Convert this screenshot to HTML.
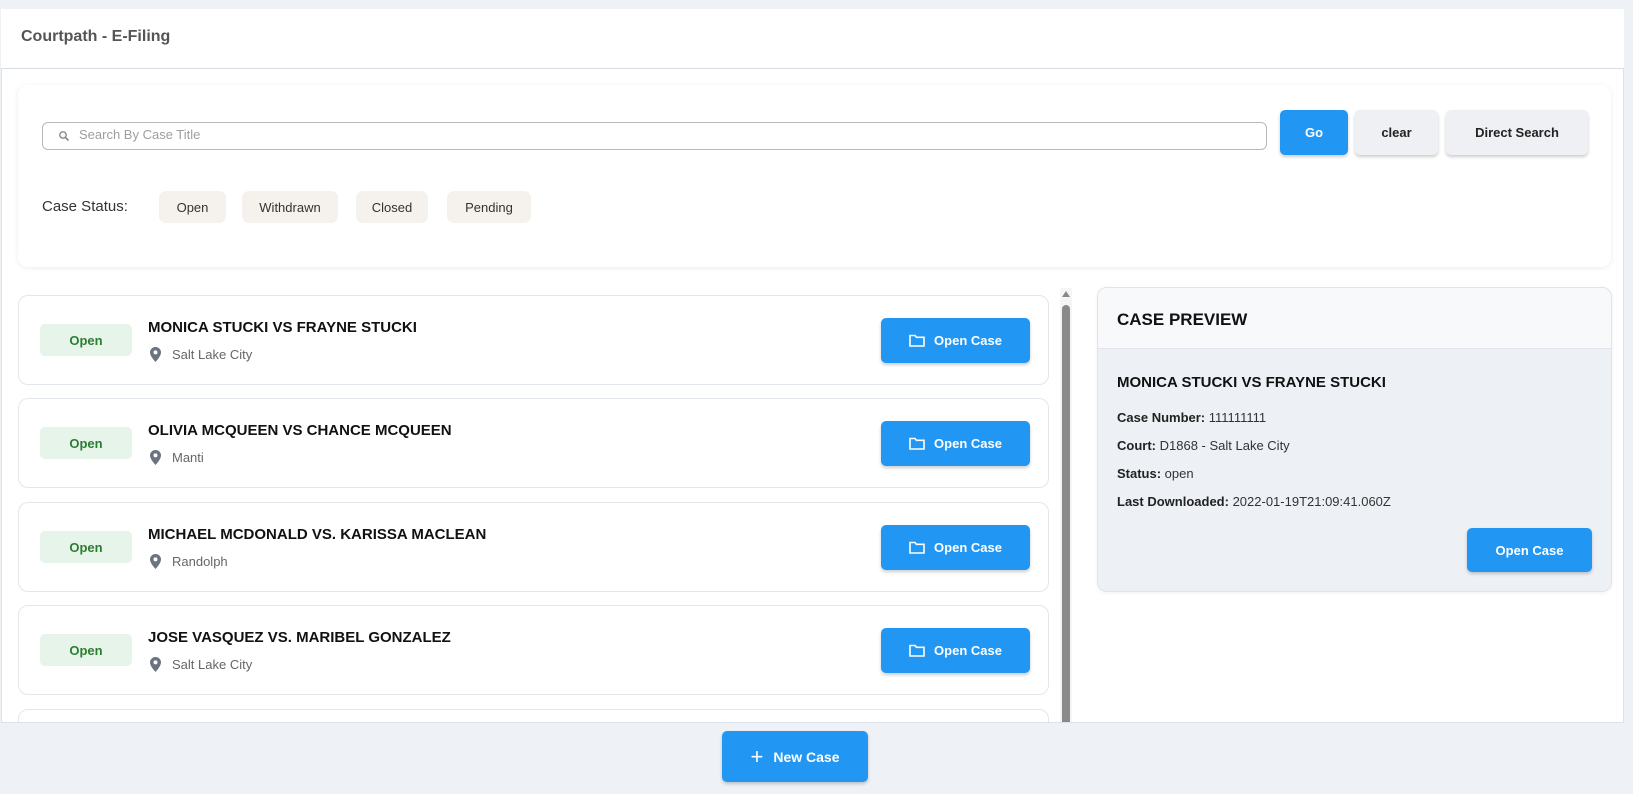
<!DOCTYPE html>
<html><head><meta charset="utf-8"><style>
*{box-sizing:border-box;margin:0;padding:0}
body{width:1633px;height:794px;overflow:hidden;background:#eef1f5;font-family:"Liberation Sans",Arial,sans-serif;position:relative}
.abs{position:absolute}
.main{left:1px;top:9px;width:1623px;height:785px;background:#fff;border:1px solid #dde2ea}
.hdr{left:1px;top:9px;width:1623px;height:60px;border-bottom:1px solid #d8dde5;background:#fff}
.title{left:21px;top:28px;font-size:16px;font-weight:bold;color:#555}
.fcard{left:18px;top:85px;width:1593px;height:182px;background:#fff;border-radius:10px;box-shadow:0 1px 6px rgba(0,0,0,.08)}
.search{left:42px;top:122px;width:1225px;height:28px;border:1px solid #b9b9b9;border-radius:6px}
.ph{left:79px;top:127px;font-size:13px;color:#9e9e9e}
.btn{display:flex;align-items:center;justify-content:center;border-radius:5px;font-weight:bold;font-size:13px;box-shadow:0 2px 3px rgba(0,0,0,.2)}
.blue{background:#2196f3;color:#fff}
.grey{background:#eef0f3;color:#222}
.lbl{left:42px;top:198px;font-size:15px;color:#333}
.chip{top:191px;height:32px;background:#f5f1ed;border-radius:7px;font-size:13px;color:#333;display:flex;align-items:center;justify-content:center}
.card{left:18px;width:1031px;height:90px;border:1px solid #e3e6ea;border-radius:10px;background:#fff}
.badge{left:21px;top:28px;width:92px;height:32px;background:#e6f4ea;color:#2e7d32;font-weight:bold;font-size:13px;border-radius:5px;display:flex;align-items:center;justify-content:center}
.ct{left:129px;top:23px;font-size:15px;font-weight:bold;color:#111}
.loc{left:153px;top:51px;font-size:13px;color:#666}
.pin{left:131px;top:51px}
.ob{left:862px;top:22px;width:149px;height:45px}
.pv{left:1097px;top:287px;width:515px;height:305px;border:1px solid #e0e4ea;border-radius:10px;background:#edf0f5;overflow:hidden;box-shadow:0 1px 4px rgba(0,0,0,.06)}
.pvh{left:0;top:0;width:100%;height:61px;background:#f8f9fb;border-bottom:1px solid #e0e4ea}
.pl{left:19px;font-size:13px;color:#333}
.pl b{color:#222}
.bottom{left:1px;top:722px;width:1623px;height:72px;background:#eef1f5;border-top:1px solid #dde2ea}
</style></head><body>
<div class="abs main"></div>
<div class="abs hdr"></div>
<div class="abs title">Courtpath - E-Filing</div>
<div class="abs fcard"></div>
<div class="abs search"></div>
<svg class="abs" style="left:58px;top:130px" width="12" height="12" viewBox="0 0 12 12"><circle cx="5" cy="5" r="3.2" fill="none" stroke="#888" stroke-width="1.4"/><path d="M7.4 7.4L10.5 10.5" stroke="#888" stroke-width="1.6"/></svg>
<div class="abs ph">Search By Case Title</div>
<div class="abs btn blue" style="left:1280px;top:110px;width:68px;height:45px">Go</div>
<div class="abs btn grey" style="left:1355px;top:110px;width:83px;height:45px">clear</div>
<div class="abs btn grey" style="left:1446px;top:110px;width:142px;height:45px">Direct Search</div>
<div class="abs lbl">Case Status:</div>
<div class="abs chip" style="left:159px;width:67px">Open</div>
<div class="abs chip" style="left:242px;width:96px">Withdrawn</div>
<div class="abs chip" style="left:356px;width:72px">Closed</div>
<div class="abs chip" style="left:447px;width:84px">Pending</div>

<div class="abs card" style="top:295px"><div class="abs badge">Open</div><div class="abs ct">MONICA STUCKI VS FRAYNE STUCKI</div><svg class="abs pin" width="11" height="15" viewBox="0 0 11 15"><path d="M5.5 0C2.5 0 0 2.4 0 5.4 0 9.4 5.5 15 5.5 15S11 9.4 11 5.4C11 2.4 8.5 0 5.5 0z" fill="#6b7280"/><circle cx="5.5" cy="5.4" r="2" fill="#fff"/></svg><div class="abs loc">Salt Lake City</div><div class="abs btn blue ob"><svg width="16" height="13" viewBox="0 0 16 13" style="margin-right:9px"><path d="M1 1.5h5l1.5 1.8H15V12H1z" fill="none" stroke="#fff" stroke-width="1.6"/></svg>Open Case</div></div>
<div class="abs card" style="top:398px"><div class="abs badge">Open</div><div class="abs ct">OLIVIA MCQUEEN VS CHANCE MCQUEEN</div><svg class="abs pin" width="11" height="15" viewBox="0 0 11 15"><path d="M5.5 0C2.5 0 0 2.4 0 5.4 0 9.4 5.5 15 5.5 15S11 9.4 11 5.4C11 2.4 8.5 0 5.5 0z" fill="#6b7280"/><circle cx="5.5" cy="5.4" r="2" fill="#fff"/></svg><div class="abs loc">Manti</div><div class="abs btn blue ob"><svg width="16" height="13" viewBox="0 0 16 13" style="margin-right:9px"><path d="M1 1.5h5l1.5 1.8H15V12H1z" fill="none" stroke="#fff" stroke-width="1.6"/></svg>Open Case</div></div>
<div class="abs card" style="top:502px"><div class="abs badge">Open</div><div class="abs ct">MICHAEL MCDONALD VS. KARISSA MACLEAN</div><svg class="abs pin" width="11" height="15" viewBox="0 0 11 15"><path d="M5.5 0C2.5 0 0 2.4 0 5.4 0 9.4 5.5 15 5.5 15S11 9.4 11 5.4C11 2.4 8.5 0 5.5 0z" fill="#6b7280"/><circle cx="5.5" cy="5.4" r="2" fill="#fff"/></svg><div class="abs loc">Randolph</div><div class="abs btn blue ob"><svg width="16" height="13" viewBox="0 0 16 13" style="margin-right:9px"><path d="M1 1.5h5l1.5 1.8H15V12H1z" fill="none" stroke="#fff" stroke-width="1.6"/></svg>Open Case</div></div>
<div class="abs card" style="top:605px"><div class="abs badge">Open</div><div class="abs ct">JOSE VASQUEZ VS. MARIBEL GONZALEZ</div><svg class="abs pin" width="11" height="15" viewBox="0 0 11 15"><path d="M5.5 0C2.5 0 0 2.4 0 5.4 0 9.4 5.5 15 5.5 15S11 9.4 11 5.4C11 2.4 8.5 0 5.5 0z" fill="#6b7280"/><circle cx="5.5" cy="5.4" r="2" fill="#fff"/></svg><div class="abs loc">Salt Lake City</div><div class="abs btn blue ob"><svg width="16" height="13" viewBox="0 0 16 13" style="margin-right:9px"><path d="M1 1.5h5l1.5 1.8H15V12H1z" fill="none" stroke="#fff" stroke-width="1.6"/></svg>Open Case</div></div>
<div class="abs card" style="top:709px;height:30px"></div>

<div class="abs" style="left:1060px;top:288px;width:12px;height:434px;background:#f5f5f5"></div>
<svg class="abs" style="left:1061px;top:290px" width="10" height="8" viewBox="0 0 10 8"><path d="M5 1L9 7H1z" fill="#888"/></svg>
<div class="abs" style="left:1062px;top:305px;width:8px;height:417px;background:#8a8a8a;border-radius:4px 4px 0 0"></div>

<div class="abs pv">
<div class="abs pvh"></div>
<div class="abs" style="left:19px;top:22px;font-size:17px;font-weight:bold;color:#111">CASE PREVIEW</div>
<div class="abs" style="left:19px;top:86px;font-size:15px;font-weight:bold;color:#111">MONICA STUCKI VS FRAYNE STUCKI</div>
<div class="abs pl" style="top:122px"><b>Case Number:</b> 111111111</div>
<div class="abs pl" style="top:150px"><b>Court:</b> D1868 - Salt Lake City</div>
<div class="abs pl" style="top:178px"><b>Status:</b> open</div>
<div class="abs pl" style="top:206px"><b>Last Downloaded:</b> 2022-01-19T21:09:41.060Z</div>
<div class="abs btn blue" style="left:369px;top:240px;width:125px;height:44px">Open Case</div>
</div>

<div class="abs bottom"></div>
<div class="abs btn blue" style="left:722px;top:731px;width:146px;height:51px;font-size:14px"><span style="font-size:22px;font-weight:normal;margin-right:10px;line-height:1">+</span>New Case</div>
</body></html>
